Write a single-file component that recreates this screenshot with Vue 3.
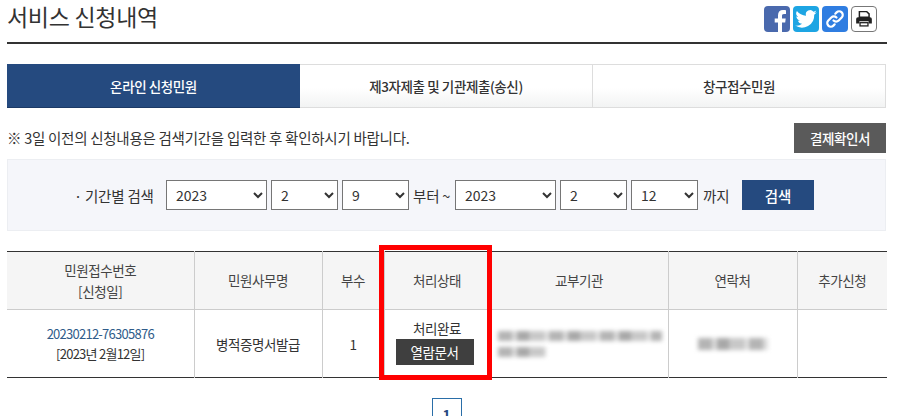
<template>
  <div class="page">
    <div class="head">
      <h2 class="title">서비스 신청내역</h2>
      <div class="share">
        <a class="ico fb">
          <svg viewBox="0 0 26 26"><path d="M18 26v-9.500h3.200l.5-4H18V10c0-1.200.4-2 2-2h2V4.300C21.500 4.200 20.300 4 19 4c-3 0-5 1.800-5 5.200v3.300h-3.300v4H14V26z" fill="#fff"/></svg>
        </a>
        <a class="ico tw">
          <svg viewBox="0 0 24 24"><path d="M22 5.800c-.7.300-1.500.500-2.300.6.800-.5 1.500-1.300 1.800-2.200-.8.500-1.700.8-2.600 1a4 4 0 0 0-6.900 3.700A11.500 11.500 0 0 1 3.600 4.600a4 4 0 0 0 1.300 5.400c-.7 0-1.300-.2-1.800-.5 0 2 1.400 3.700 3.300 4-.6.200-1.200.2-1.800.1.500 1.600 2 2.800 3.800 2.800A8.100 8.100 0 0 1 2 18.100 11.400 11.400 0 0 0 19.600 8c.9-.6 1.700-1.300 2.400-2.200z" fill="#fff"/></svg>
        </a>
        <a class="ico lk">
          <svg viewBox="0 0 26 26" fill="none" stroke="#fff" stroke-width="2.200" stroke-linecap="round"><path d="M11.500 14.500a3.600 3.600 0 0 0 5.200 0l3-3a3.600 3.600 0 0 0-5.100-5.100l-1.300 1.300"/><path d="M14.500 11.500a3.600 3.600 0 0 0-5.200 0l-3 3a3.600 3.600 0 0 0 5.100 5.100l1.300-1.300"/></svg>
        </a>
        <a class="ico pr">
          <svg viewBox="0 0 26 26"><path d="M8 5h8l2.500 2.500V11H8z" fill="none" stroke="#222" stroke-width="1.600"/><path d="M6.500 11h13a2 2 0 0 1 2 2v5H18v-2.500H8V18H4.500v-5a2 2 0 0 1 2-2z" fill="#222"/><rect x="8.700" y="17" width="8.600" height="3.500" fill="none" stroke="#222" stroke-width="1.400"/></svg>
        </a>
      </div>
    </div>

    <ul class="tabs">
      <li v-for="(t, i) in tabs" :key="t" class="tab" :class="{ on: i === 0 }">{{ t }}</li>
    </ul>

    <div class="note-row">
      <p class="note">※ 3일 이전의 신청내용은 검색기간을 입력한 후 확인하시기 바랍니다.</p>
      <button class="confirm-btn">결제확인서</button>
    </div>

    <div class="search">
      <span class="search-label">· 기간별 검색</span>
      <div class="selects">
        <select class="sel year"><option>2023</option></select>
        <select class="sel"><option>2</option></select>
        <select class="sel"><option>9</option></select>
      </div>
      <span class="from">부터 ~</span>
      <div class="selects">
        <select class="sel year"><option>2023</option></select>
        <select class="sel"><option>2</option></select>
        <select class="sel"><option>12</option></select>
      </div>
      <span class="to">까지</span>
      <button class="search-btn">검색</button>
    </div>

    <div class="table-wrap">
      <table class="list">
        <colgroup>
          <col v-for="w in colWidths" :key="w.id" :style="{ width: w.px + 'px' }" />
        </colgroup>
        <thead>
          <tr>
            <th>민원접수번호<br />[신청일]</th>
            <th>민원사무명</th>
            <th>부수</th>
            <th>처리상태</th>
            <th>교부기관</th>
            <th>연락처</th>
            <th>추가신청</th>
          </tr>
        </thead>
        <tbody>
          <tr>
            <td class="date"><span class="num">20230212-76305876</span><br />[2023년 2월12일]</td>
            <td>병적증명서발급</td>
            <td>1</td>
            <td>
              <div class="status">처리완료</div>
              <button class="doc-btn">열람문서</button>
            </td>
            <td class="left">
              <div class="smudge long"></div>
              <div class="smudge short"></div>
            </td>
            <td><div class="smudge phone"></div></td>
            <td></td>
          </tr>
        </tbody>
      </table>
      <div class="highlight"></div>
    </div>

    <div class="pager"><a class="page-num">1</a></div>
  </div>
</template>

<script setup>
const tabs = ['온라인 신청민원', '제3자제출 및 기관제출(송신)', '창구접수민원']
const colWidths = [
  { id: 'no', px: 187 },
  { id: 'name', px: 128 },
  { id: 'count', px: 62 },
  { id: 'state', px: 106 },
  { id: 'org', px: 178 },
  { id: 'tel', px: 129 },
  { id: 'add', px: 90 }
]
</script>

<style>
html, body { overflow: hidden; background: #fff; }
</style>

<style scoped>
.page { width: 880px; height: 416px; margin-left: 7px; overflow: hidden; color: #333; font-family: "Noto Sans CJK KR", "Liberation Sans", sans-serif; font-size: 13.500px; letter-spacing: -0.4px; }
.head { display: flex; justify-content: space-between; align-items: flex-start; height: 42px; border-bottom: 2px solid #333; }
.title { margin: 0; font-size: 23px; font-weight: 400; line-height: 32px; color: #333; letter-spacing: -0.3px; }
.share { display: flex; gap: 3px; margin: 6px 10px 0 0; }
.ico { display: block; width: 26px; height: 26px; border-radius: 4px; overflow: hidden; }
.ico svg { display: block; width: 100%; height: 100%; }
.fb { background: #4a69ad; }
.tw { background: #1da5e3; }
.lk { background: #2f7de1; }
.pr { background: #fff; border: 1px solid #777; box-sizing: border-box; }

.tabs { display: flex; list-style: none; margin: 20px 1px 0 0; padding: 0; height: 44px; }
.tab { flex: 1; display: flex; align-items: center; justify-content: center; box-sizing: border-box; border: 1px solid #ddd; border-left: none; background: linear-gradient(#fff 55%, #f2f3f3); font-weight: 500; color: #333; }
.tab.on { background: #254a7f; color: #fff; border: none; flex: 0 0 293px; box-shadow: inset 0 -1px 0 #1c3a66; }
.tab:last-child { flex: 0 0 293px; }

.note-row { display: flex; justify-content: space-between; align-items: center; height: 30px; margin: 15px 1px 0 0; }
.note { margin: 0 0 2px; color: #333; font-size: 14.500px; letter-spacing: -0.27px; }
.confirm-btn { width: 92px; height: 30px; border: none; background: #5a5a5a; color: #fff; font: inherit; letter-spacing: inherit; font-weight: 500; padding: 0; }

.search { display: flex; align-items: center; box-sizing: border-box; height: 72px; margin: 6px 1px 0 0; padding-left: 66px; background: #f5f6fa; border: 1px solid #eceef2; font-size: 14.500px; letter-spacing: -0.2px; }
.search-label { width: 92px; color: #333; }
.selects { display: flex; gap: 4px; }
.sel { width: 67px; height: 30px; box-sizing: border-box; padding: 0 0 0 5px; background: #fff; border: 1px solid #767676; border-radius: 0; font-family: "Noto Sans CJK KR", "Liberation Sans", sans-serif; font-size: 14px; color: #333; }
.sel.year { width: 101px; }
.from { width: 46px; padding-left: 4px; box-sizing: border-box; white-space: nowrap; }
.to { margin-left: 5px; width: 39px; }
.search-btn { width: 72px; height: 30px; border: none; padding: 0; background: #254a7f; color: #fff; font: inherit; letter-spacing: inherit; font-weight: 500; }

.table-wrap { position: relative; margin-top: 20px; }
.list { width: 880px; border-collapse: collapse; table-layout: fixed; border-top: 1px solid #333; border-bottom: 1px solid #333; }
.list th { height: 57px; padding: 0; background: #f5f5f5; font-weight: 400; color: #444; line-height: 21px; border-bottom: 1px solid #ccc; border-left: 1px solid #ccc; }
.list td { height: 67px; padding: 0; text-align: center; line-height: 20px; border-left: 1px solid #ccc; color: #333; }
.list th:first-child, .list td:first-child { border-left: none; }
.list td.left { padding: 0 4px; }
.list td.date { font-size: 13px; letter-spacing: -0.75px; }
.num { color: #2f5c8a; }
.status { line-height: 20px; }
.doc-btn { display: block; width: 78px; height: 26px; margin: 1px 0 4px 11px; border: none; padding: 0; background: #3f3f3f; color: #fff; font: inherit; letter-spacing: inherit; }
.smudge { background: repeating-linear-gradient(90deg, #b4b4b4 0 14px, #dcdcdc 14px 19px, #a8a8a8 19px 31px, #c8c8c8 31px 47px, #e6e6e6 47px 51px); filter: blur(2px); }
.smudge.long { width: 164px; height: 10px; margin: 0 0 6px 3px; }
.smudge.short { width: 48px; height: 10px; margin-left: 3px; }
.smudge.phone { width: 70px; height: 12px; margin: 0 auto; }
.highlight { position: absolute; left: 372px; top: -6px; width: 113px; height: 135px; box-sizing: border-box; border: 5px solid #f00; pointer-events: none; }

.pager { display: flex; justify-content: center; margin-top: 20px; }
.page-num { display: block; width: 30px; height: 30px; margin-right: 1px; box-sizing: border-box; border: 1px solid #2a6ea8; color: #254a7f; font-weight: 700; font-size: 14px; line-height: 30px; text-align: center; }
</style>
